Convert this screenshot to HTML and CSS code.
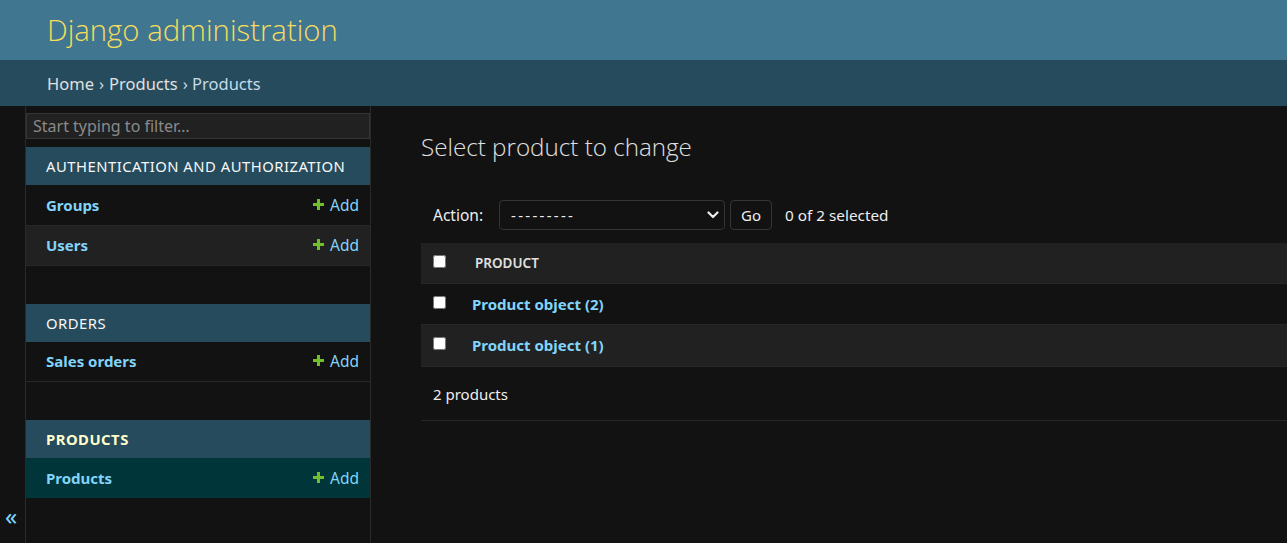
FILE: index.html
```html
<!DOCTYPE html>
<html lang="en">
<head>
<meta charset="utf-8">
<title>Select product to change | Django site admin</title>
<link rel="stylesheet" href="styles.css">
</head>
<body>
<div class="container">
  <header class="header">
    <h1 class="site-name">Django administration</h1>
  </header>
  <nav class="breadcrumbs">
    <a href="#">Home</a> › <a href="#">Products</a> › Products
  </nav>
  <div class="main">
    <button class="toggle-nav" type="button" aria-label="Toggle navigation"><span>«</span></button>
    <aside class="nav-sidebar">
      <input class="nav-filter" type="search" placeholder="Start typing to filter…">
      <table class="module">
        <caption>Authentication and Authorization</caption>
        <tbody>
          <tr><th><a href="#">Groups</a></th><td><a class="addlink" href="#"><svg width="13" height="13" viewBox="0 0 13 13"><path d="M5 1h3v4h4v3H8v4H5V8H1V5h4z" fill="#70bf2b"/></svg>Add</a></td></tr>
          <tr class="alt"><th><a href="#">Users</a></th><td><a class="addlink" href="#"><svg width="13" height="13" viewBox="0 0 13 13"><path d="M5 1h3v4h4v3H8v4H5V8H1V5h4z" fill="#70bf2b"/></svg>Add</a></td></tr>
        </tbody>
      </table>
      <table class="module">
        <caption>Orders</caption>
        <tbody>
          <tr><th><a href="#">Sales orders</a></th><td><a class="addlink" href="#"><svg width="13" height="13" viewBox="0 0 13 13"><path d="M5 1h3v4h4v3H8v4H5V8H1V5h4z" fill="#70bf2b"/></svg>Add</a></td></tr>
        </tbody>
      </table>
      <table class="module current-app">
        <caption>Products</caption>
        <tbody>
          <tr class="current-model"><th><a href="#">Products</a></th><td><a class="addlink" href="#"><svg width="13" height="13" viewBox="0 0 13 13"><path d="M5 1h3v4h4v3H8v4H5V8H1V5h4z" fill="#70bf2b"/></svg>Add</a></td></tr>
        </tbody>
      </table>
    </aside>
    <main class="content">
      <h1 class="page-title">Select product to change</h1>
      <div class="actions">
        <label class="action-label">Action:</label>
        <span class="select-wrap">
          <select class="action-select"><option>---------</option></select>
          <svg class="chevron" width="12" height="8" viewBox="0 0 12 8"><path d="M1.5 1.5 6 6l4.5-4.5" fill="none" stroke="#eeeeee" stroke-width="2.2" stroke-linecap="round" stroke-linejoin="round"/></svg>
        </span>
        <button class="go-btn" type="button">Go</button>
        <span class="counter">0 of 2 selected</span>
      </div>
      <table class="result-list">
        <thead>
          <tr><th class="cb"><input type="checkbox"></th><th class="col">Product</th></tr>
        </thead>
        <tbody>
          <tr><td class="cb"><input type="checkbox"></td><th class="obj"><a href="#">Product object (2)</a></th></tr>
          <tr class="alt"><td class="cb"><input type="checkbox"></td><th class="obj"><a href="#">Product object (1)</a></th></tr>
        </tbody>
      </table>
      <p class="paginator">2 products</p>
    </main>
  </div>
</div>
</body>
</html>
```

FILE: styles.css
```css
* { box-sizing: border-box; }
html, body { margin: 0; padding: 0; }
body {
  background: #121212;
  color: #eeeeee;
  font-family: "Noto Sans", "Open Sans", sans-serif;
  font-size: 14px;
  overflow: hidden;
}
a { text-decoration: none; color: #81d4fa; }

.header {
  background: #417690;
  height: 60px;
  padding: 0 47px;
  display: flex;
  align-items: center;
}
.site-name {
  margin: 0;
  font-family: "Open Sans", "Noto Sans", sans-serif;
  font-size: 29.3px;
  font-weight: 300;
  color: #f5dd5d;
  line-height: 1;
  padding-top: 2px;
}

.breadcrumbs {
  background: #264b5d;
  height: 46px;
  padding: 0 47px;
  display: flex;
  align-items: center;
  gap: 5px;
  color: #c4dce8;
  font-size: 16.5px;
}
.breadcrumbs a { color: #e0e0e0; }

.main {
  display: flex;
  min-height: calc(100vh - 106px);
}

.toggle-nav {
  flex: 0 0 26px;
  width: 26px;
  border: 0;
  border-right: 1px solid #2a2a2a;
  background: #121212;
  color: #81d4fa;
  font-family: "Noto Sans", sans-serif;
  font-size: 24px;
  padding: 0 3px 11px 0;
  display: flex;
  align-items: flex-end;
  justify-content: center;
}

.nav-sidebar {
  flex: 0 0 345px;
  width: 345px;
  border-right: 1px solid #2a2a2a;
  padding-top: 7px;
}
.nav-filter {
  display: block;
  width: 100%;
  height: 26px;
  margin: 0 0 8px;
  padding: 2px 6px;
  background: #212121;
  border: 1px solid #353535;
  color: #eeeeee;
  font-family: inherit;
  font-size: 16px;
  outline: none;
}
.nav-filter::placeholder { color: #8a8a8a; }

.module {
  width: 100%;
  border-collapse: collapse;
  margin-bottom: 38px;
}
.module caption {
  background: #264b5d;
  color: #f7f7f7;
  text-align: left;
  text-transform: uppercase;
  letter-spacing: 0.5px;
  font-size: 14.8px;
  font-weight: 400;
  height: 38px;
  padding: 0 20px;
  line-height: 38px;
}
.current-app caption { color: #ffffcc; font-weight: 700; }
.module tr { height: 40px; border-bottom: 1px solid #272727; }
.module tr.alt { background: #212121; }
.module tr.current-model { background: #00363a; border-bottom: 0; }
.module th {
  text-align: left;
  padding: 0 0 0 20px;
  font-weight: 700;
  font-size: 15px;
}
.module td {
  text-align: right;
  padding: 0 11px 0 0;
}
.addlink {
  display: inline-flex;
  align-items: center;
  gap: 5px;
  font-size: 15.5px;
}
.addlink svg { margin-top: -1px; }

.content {
  flex: 1;
  padding: 20px 0 0 50px;
  min-width: 0;
}
.page-title {
  margin: 0 0 32px;
  font-family: "Open Sans", "Noto Sans", sans-serif;
  font-size: 24.2px;
  font-weight: 300;
  color: #e0e0e0;
  height: 42px;
  line-height: 42px;
}
.actions {
  display: flex;
  align-items: center;
  height: 30px;
  padding-left: 12px;
  margin-bottom: 13px;
}
.action-label { font-size: 15.5px; margin-right: 16px; }
.select-wrap { position: relative; display: inline-block; }
.action-select {
  appearance: none;
  -webkit-appearance: none;
  width: 226px;
  height: 30px;
  background: #121212;
  border: 1px solid #353535;
  border-radius: 4px;
  color: #eeeeee;
  font-family: inherit;
  font-size: 15px;
  letter-spacing: 2.3px;
  padding: 0 11px;
}
.chevron { position: absolute; right: 6px; top: 11px; }
.go-btn {
  margin-left: 5px;
  height: 30px;
  width: 42px;
  background: #121212;
  border: 1px solid #353535;
  border-radius: 4px;
  color: #eeeeee;
  font-family: inherit;
  font-size: 15px;
  padding: 0;
}
.counter { margin-left: 13px; font-size: 15.3px; }

.result-list {
  width: 100%;
  border-collapse: collapse;
}
.result-list thead tr {
  background: #212121;
  height: 40px;
  border-bottom: 1px solid #272727;
}
.result-list tbody tr { height: 41px; border-bottom: 1px solid #272727; }
.result-list tbody tr.alt { background: #212121; height: 42px; }
.result-list .cb {
  width: 42px;
  padding: 0 0 0 12px;
  text-align: left;
}
.result-list input[type="checkbox"] { margin: 0; width: 13px; height: 13px; vertical-align: middle; position: relative; top: -3px; }
.result-list .col {
  text-align: left;
  text-transform: uppercase;
  font-size: 13.5px;
  font-weight: 600;
  color: #e0e0e0;
  padding-left: 12px;
}
.result-list .obj {
  text-align: left;
  font-weight: 700;
  font-size: 15px;
  padding-left: 9px;
}
.paginator {
  margin: 0;
  height: 54px;
  line-height: 54px;
  padding-left: 12px;
  border-bottom: 1px solid #272727;
  font-size: 15px;
}
```
